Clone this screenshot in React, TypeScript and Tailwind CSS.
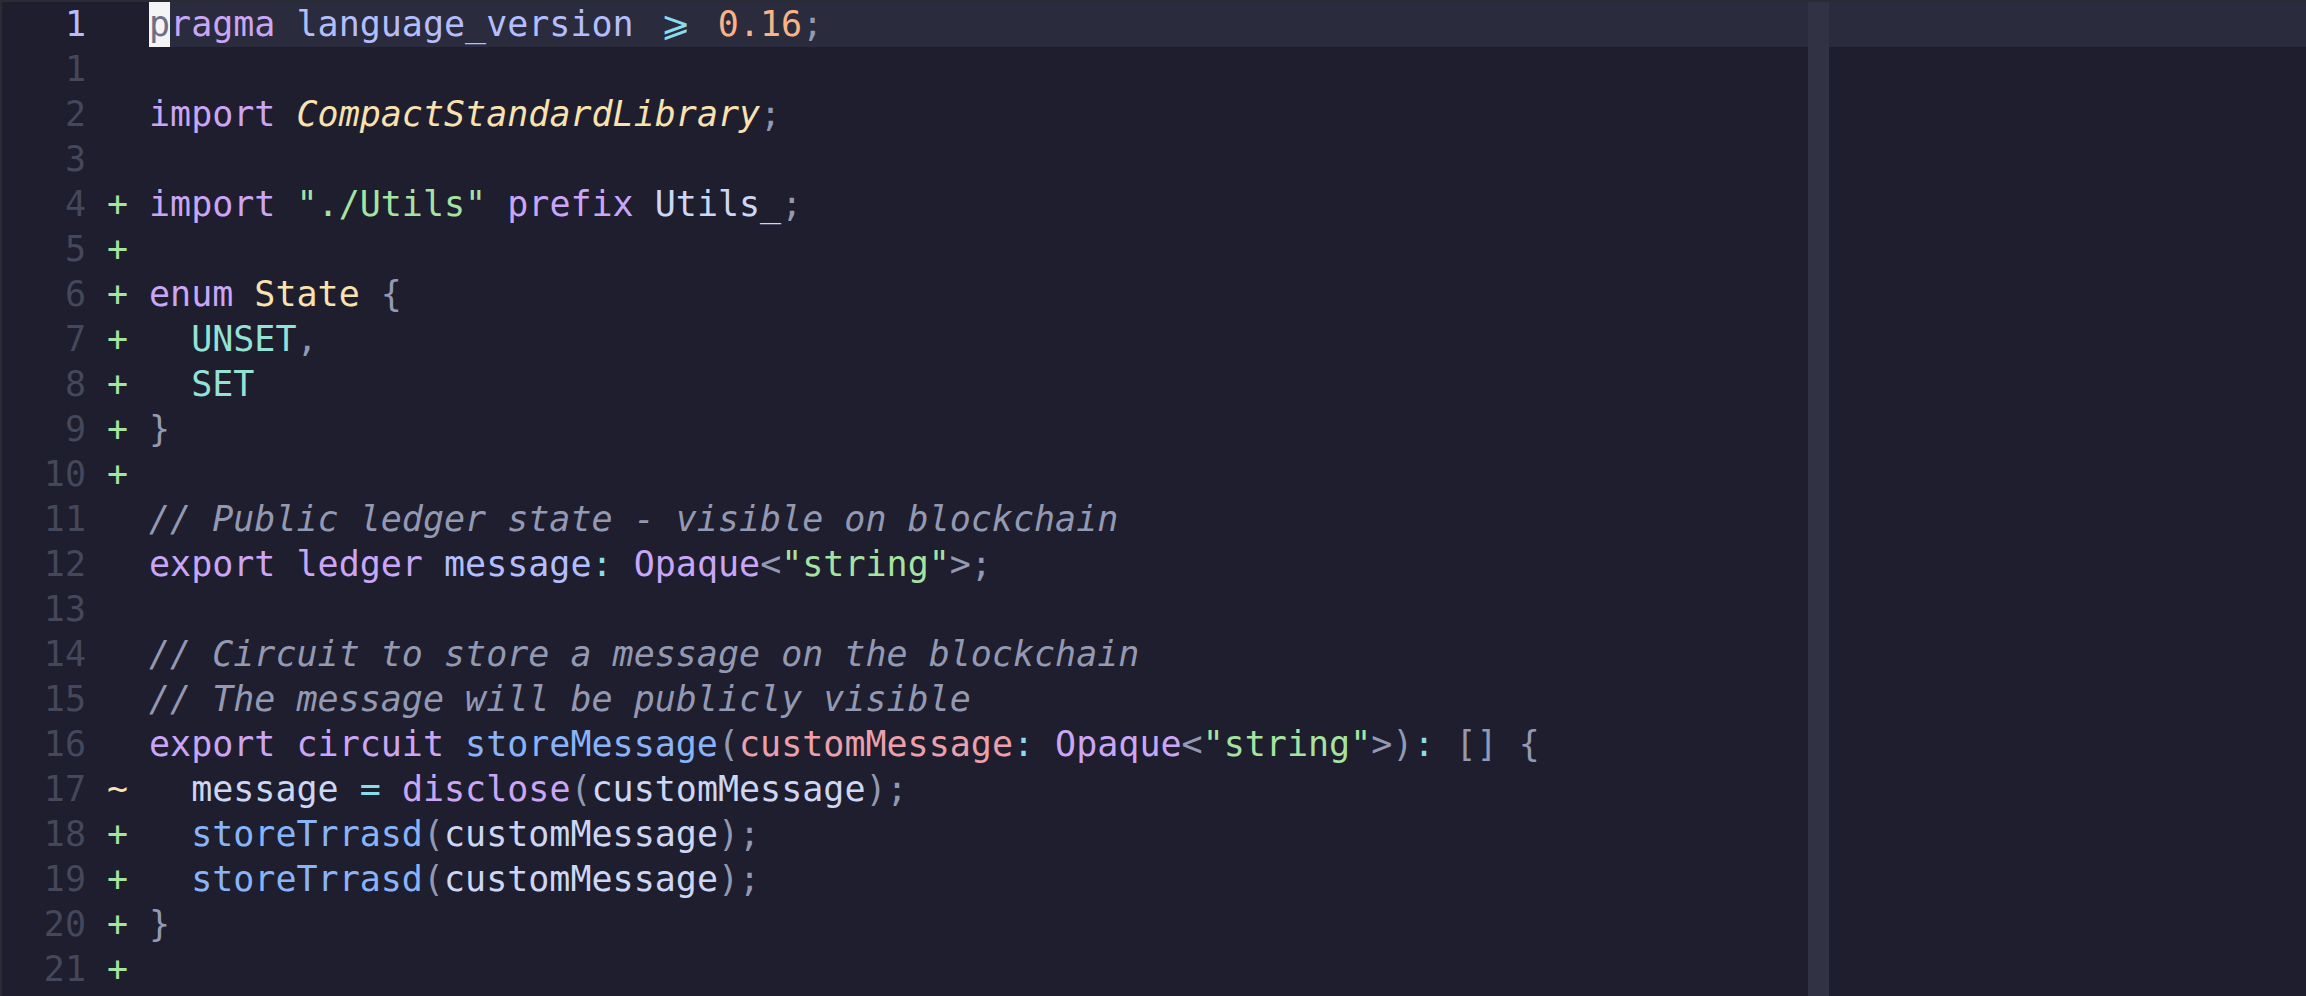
import React from "react";

type Seg = { t: string; c: string; i?: boolean };

const MAUVE = "text-[#cba6f7]";
const LAV = "text-[#b4befe]";
const SKY = "text-[#89dceb]";
const PEACH = "text-[#fab387]";
const OV = "text-[#9399b2]";
const YEL = "text-[#f9e2af]";
const GRN = "text-[#a6e3a1]";
const TXT = "text-[#cdd6f4]";
const TEAL = "text-[#94e2d5]";
const BLUE = "text-[#89b4fa]";
const MAR = "text-[#eba0ac]";
const CMT = "text-[#9399b2]";

type Row = { n: string; s?: string; segs: Seg[] };

const rows: Row[] = [
  { n: "1", segs: [] },
  { n: "1", segs: [] },
  {
    n: "2",
    segs: [
      { t: "import ", c: MAUVE },
      { t: "CompactStandardLibrary", c: YEL, i: true },
      { t: ";", c: OV },
    ],
  },
  { n: "3", segs: [] },
  {
    n: "4",
    s: "+",
    segs: [
      { t: "import ", c: MAUVE },
      { t: "\"./Utils\"", c: GRN },
      { t: " prefix ", c: MAUVE },
      { t: "Utils_", c: TXT },
      { t: ";", c: OV },
    ],
  },
  { n: "5", s: "+", segs: [] },
  {
    n: "6",
    s: "+",
    segs: [
      { t: "enum ", c: MAUVE },
      { t: "State", c: YEL },
      { t: " {", c: OV },
    ],
  },
  {
    n: "7",
    s: "+",
    segs: [
      { t: "  UNSET", c: TEAL },
      { t: ",", c: OV },
    ],
  },
  { n: "8", s: "+", segs: [{ t: "  SET", c: TEAL }] },
  { n: "9", s: "+", segs: [{ t: "}", c: OV }] },
  { n: "10", s: "+", segs: [] },
  {
    n: "11",
    segs: [{ t: "// Public ledger state - visible on blockchain", c: CMT, i: true }],
  },
  {
    n: "12",
    segs: [
      { t: "export ledger ", c: MAUVE },
      { t: "message", c: LAV },
      { t: ":", c: SKY },
      { t: " Opaque", c: MAUVE },
      { t: "<", c: OV },
      { t: "\"string\"", c: GRN },
      { t: ">;", c: OV },
    ],
  },
  { n: "13", segs: [] },
  {
    n: "14",
    segs: [{ t: "// Circuit to store a message on the blockchain", c: CMT, i: true }],
  },
  {
    n: "15",
    segs: [{ t: "// The message will be publicly visible", c: CMT, i: true }],
  },
  {
    n: "16",
    segs: [
      { t: "export circuit ", c: MAUVE },
      { t: "storeMessage", c: BLUE },
      { t: "(", c: OV },
      { t: "customMessage", c: MAR },
      { t: ":", c: SKY },
      { t: " Opaque", c: MAUVE },
      { t: "<", c: OV },
      { t: "\"string\"", c: GRN },
      { t: ">)", c: OV },
      { t: ":", c: SKY },
      { t: " [] {", c: OV },
    ],
  },
  {
    n: "17",
    s: "~",
    segs: [
      { t: "  message", c: TXT },
      { t: " =", c: SKY },
      { t: " disclose", c: MAUVE },
      { t: "(", c: OV },
      { t: "customMessage", c: TXT },
      { t: ");", c: OV },
    ],
  },
  {
    n: "18",
    s: "+",
    segs: [
      { t: "  storeTrrasd", c: BLUE },
      { t: "(", c: OV },
      { t: "customMessage", c: TXT },
      { t: ");", c: OV },
    ],
  },
  {
    n: "19",
    s: "+",
    segs: [
      { t: "  storeTrrasd", c: BLUE },
      { t: "(", c: OV },
      { t: "customMessage", c: TXT },
      { t: ");", c: OV },
    ],
  },
  { n: "20", s: "+", segs: [{ t: "}", c: OV }] },
  { n: "21", s: "+", segs: [] },
];

function Gutter({ n, s, current }: { n: string; s?: string; current?: boolean }) {
  return (
    <div className="flex shrink-0">
      <span className={"w-[84px] text-right " + (current ? "text-[#b4befe]" : "text-[#45475a]")}>{n}</span>
      <span className="w-[21px]" />
      <span className={"w-[21px] text-center " + (s === "~" ? "text-[#f9e2af]" : "text-[#a6e3a1]")}>{s ?? ""}</span>
      <span className="w-[21px]" />
    </div>
  );
}

export default function App() {
  return (
    <div className="w-[2306px] h-[996px] overflow-hidden bg-[#1e1e2e] border-l-2 border-t-2 border-[#2a2c35] flex flex-col font-['DejaVu_Sans_Mono',monospace] text-[35px] leading-[45px]">
      {rows.map((r, idx) => {
        const current = idx === 0;
        return (
          <div key={idx} className="flex h-[45px] shrink-0">
            <Gutter n={r.n} s={r.s} current={current} />
            <div className={"w-[1659px] shrink-0 whitespace-pre " + (current ? "bg-[#2a2b3c]" : "")}>
              {current ? (
                <>
                  <span className="inline-block h-[45px] bg-[#f4f4f6] text-[#6c7086]">p</span>
                  <span className={MAUVE}>ragma</span>
                  <span className={LAV}> language_version </span>
                  <span className={"inline-block w-[42px] text-center " + SKY}>⩾</span>
                  <span className={PEACH}> 0.16</span>
                  <span className={OV}>;</span>
                </>
              ) : (
                r.segs.map((sg, j) => (
                  <span key={j} className={sg.c + (sg.i ? " italic" : "")}>
                    {sg.t}
                  </span>
                ))
              )}
            </div>
            <div className="w-[21px] shrink-0 bg-[#313244]" />
            <div className={"flex-1 " + (current ? "bg-[#2a2b3c]" : "")} />
          </div>
        );
      })}
      <div className="flex flex-1">
        <div className="w-[1806px] shrink-0" />
        <div className="w-[21px] shrink-0 bg-[#313244]" />
        <div className="flex-1" />
      </div>
    </div>
  );
}
